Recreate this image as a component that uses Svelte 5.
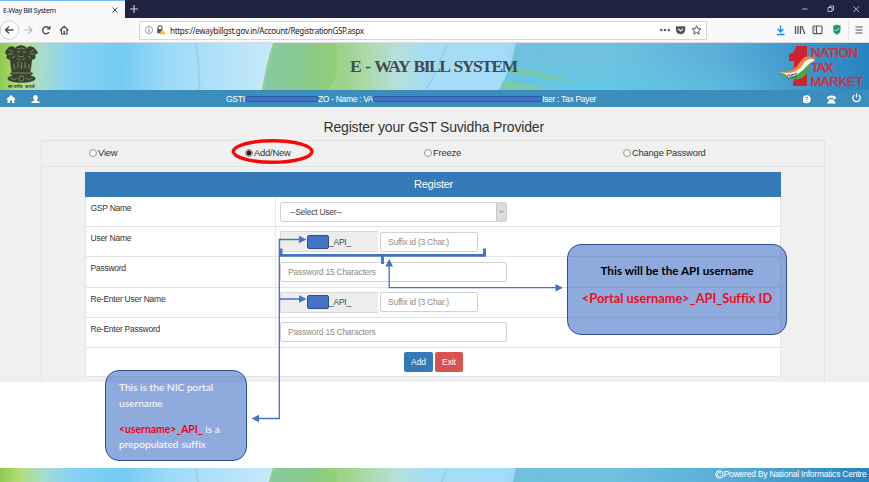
<script>
  const rows = [
    { label: 'GSP Name', kind: 'select' },
    { label: 'User Name', kind: 'user' },
    { label: 'Password', kind: 'password' },
    { label: 'Re-Enter User Name', kind: 'user' },
    { label: 'Re-Enter Password', kind: 'password' }
  ];
  const modes = [
    { label: 'View', cls: 'm-view' },
    { label: 'Add/New', cls: 'm-add', checked: true },
    { label: 'Freeze', cls: 'm-freeze' },
    { label: 'Change Password', cls: 'm-change' }
  ];
</script>

{#snippet scenery(id, h)}
  <svg class="scenery" width="869" height={h} viewBox="0 0 869 {h}" aria-hidden="true">
    <defs>
      <linearGradient id="{id}a" gradientUnits="userSpaceOnUse" x1="0" y1="0" x2="280" y2="12">
        <stop offset="0" stop-color="#8ec850" /><stop offset=".07" stop-color="#b4dc78" />
        <stop offset=".15" stop-color="#a9dccb" /><stop offset=".25" stop-color="#88d2f3" />
        <stop offset=".44" stop-color="#74cbf2" /><stop offset=".6" stop-color="#9cdaf7" />
        <stop offset=".85" stop-color="#b9e4fa" /><stop offset="1" stop-color="#c9eaf9" />
      </linearGradient>
      <linearGradient id="{id}b" gradientUnits="userSpaceOnUse" x1="262" y1="0" x2="530" y2="0">
        <stop offset="0" stop-color="#84c9a4" /><stop offset=".16" stop-color="#88ca8e" />
        <stop offset=".27" stop-color="#95ce78" /><stop offset=".38" stop-color="#aad9a4" />
        <stop offset=".5" stop-color="#b5dfd9" /><stop offset=".62" stop-color="#a6dcf5" />
        <stop offset=".9" stop-color="#a5dcf8" /><stop offset="1" stop-color="#8dcfee" />
      </linearGradient>
      <linearGradient id="{id}c" gradientUnits="userSpaceOnUse" x1="505" y1="30" x2="869" y2="0">
        <stop offset="0" stop-color="#70c1dd" /><stop offset=".3" stop-color="#70c0df" />
        <stop offset=".6" stop-color="#5aaed8" /><stop offset="1" stop-color="#2583c1" />
      </linearGradient>
      <radialGradient id="{id}d" gradientUnits="userSpaceOnUse" cx="0" cy="0" r="1" gradientTransform="translate(590 56) scale(230 46)">
        <stop offset="0" stop-color="#58cbe8" stop-opacity=".85" /><stop offset="1" stop-color="#5bcbe6" stop-opacity="0" />
      </radialGradient>
      <linearGradient id="{id}e" x1="0" y1="0" x2="1" y2="0">
        <stop offset="0" stop-color="#c5ecc8" stop-opacity=".2" /><stop offset="1" stop-color="#a6ddb5" stop-opacity="0" />
      </linearGradient>
    </defs>
    <rect width="285" height="47" fill="url(#{id}a)" />
    <path d="M93 0Q99 18 103 47" fill="none" stroke="#7fd0d5" stroke-width="3" opacity=".3" />
    <path d="M196 0Q200 24 199 47" fill="none" stroke="#8bcfd0" stroke-width="2" opacity=".6" />
    <path d="M273 0H530V47H262Q266 22 273 0Z" fill="url(#{id}b)" />
    <path d="M264 47Q266 24 274 0" fill="none" stroke="#9ad18d" stroke-width="1.5" />
    <path d="M336 0Q343 25 329 47H355Q364 20 350 0Z" fill="url(#{id}e)" />
    <path d="M447 0Q439 24 426 47" fill="none" stroke="#79c1df" stroke-width="1.3" opacity=".5" />
    <path d="M516 0H869V47H499Q512 24 516 0Z" fill="url(#{id}c)" />
    <path d="M516 0H869V47H499Q512 24 516 0Z" fill="url(#{id}d)" />
    {#if h > 20}
      <path d="M509 24Q535 27 580 40Q540 35 508 29Z" fill="#82ca8b" opacity=".7" />
      <path d="M503 38Q525 39 552 47H500Z" fill="#85cb9a" opacity=".7" />
    {/if}
  </svg>
{/snippet}

<div class="page">
  <div class="tabs">
    <div class="tab"><span>E-Way Bill System</span>
      <svg width="6" height="6" viewBox="0 0 6 6"><path d="M.5.5l5 5M5.500.5l-5 5" stroke="#444" stroke-width="1" /></svg>
    </div>
    <svg class="plus" width="8" height="8" viewBox="0 0 8 8"><path d="M4 0v8M0 4h8" stroke="#d5d5dc" stroke-width="1" /></svg>
    <svg class="win" width="60" height="8" viewBox="0 0 60 8" fill="none" stroke="#c4c4cf" stroke-width=".9">
      <path d="M0 4h5.500M26 2.500h4v4h-4zM27.500 2.500v-1.500h4v4H30M51.500 1.500l5.500 5.500M57 1.500l-5.500 5.500" />
    </svg>
  </div>

  <div class="toolbar">
    <svg class="navicons" width="72" height="24" viewBox="0 0 72 24" fill="none" stroke="#4c4c4f" stroke-width="1.4">
      <circle cx="9.500" cy="12" r="9.200" fill="#fdfdfd" stroke="#c6c6c8" stroke-width=".8" />
      <path d="M13.500 12H5.500M9 8.500L5.500 12L9 15.500" />
      <path d="M24 12h8M28.500 8.500L32 12l-3.500 3.500" stroke="#b6b6b8" stroke-width="1.1" />
      <path d="M49 14.200A3.500 3.500 0 1 1 48.500 9.600" /><path d="M50.500 7.500v4h-4z" fill="#4c4c4f" stroke="none" />
      <path d="M60 12.200L64.200 8.300L68.400 12.200M61.500 11.500V16H67v-4.500" stroke-width="1.2" /><path d="M63.500 13h1.500v3h-1.500z" fill="#4c4c4f" stroke="none" />
    </svg>
    <div class="url">
      <svg width="24" height="12" viewBox="0 0 24 12">
        <circle cx="5" cy="6" r="3.600" fill="none" stroke="#777" stroke-width=".7" /><path d="M5 5.300v3M5 3.500v1" stroke="#666" stroke-width=".9" />
        <path d="M14 5V3.700a2 2 0 0 1 4 0V5" fill="none" stroke="#555" stroke-width="1.100" /><rect x="13.200" y="5" width="5.600" height="4.300" fill="#555" />
        <path d="M18.300 4.700L21.500 10.300H15.200z" fill="#fdb916" /><path d="M18.300 6.500v2" stroke="#fff" stroke-width=".6" />
      </svg>
      <span class="address">https://ewaybillgst.gov.in/Account/RegistrationGSP.aspx</span>
      <svg class="urlicons" width="44" height="12" viewBox="0 0 44 12">
        <g fill="#555"><circle cx="2.300" cy="6" r="1.200" /><circle cx="6" cy="6" r="1.200" /><circle cx="9.700" cy="6" r="1.200" />
          <path d="M17.500 2.200h8.200q.6 0 .6.6V5.600a4.700 4.700 0 0 1-9.400 0V2.800q0-.6.6-.6z" /></g>
        <path d="M19.300 4.900l2.300 2.200 2.300-2.200" fill="none" stroke="#fff" stroke-width="1.100" />
        <path d="M37.500 1.700l1.200 2.900 3.200.3-2.400 2.100.7 3.100-2.700-1.600-2.700 1.600.7-3.100-2.400-2.100 3.200-.3z" fill="none" stroke="#555" stroke-width="1" />
      </svg>
    </div>
    <svg class="tools" width="92" height="24" viewBox="0 0 92 24" fill="none" stroke="#555" stroke-width="1.100">
      <path d="M4.500 7.500v6M1.700 11l2.800 3 2.800-3M1 16.500h7.500" stroke="#1886f5" stroke-width="1.300" />
      <path d="M19.500 8v8M22 8v8M24.500 8v8M25.800 8l3 8" stroke-width="1.300" />
      <rect x="37" y="8" width="9" height="7.600" rx="1" /><path d="M40.500 8v7.500M38.300 10h1M38.300 12h1" />
      <path d="M57.300 7.600q2 .1 3.600-1 1.500 1 3.600 1v4q0 3.700-3.600 5.200-3.600-1.500-3.600-5.200z" fill="#179a72" stroke="none" /><path d="M59 11.500l1.500 1.500 2.500-3" stroke="#dff5ec" stroke-width=".9" />
      <path d="M72.500 2v20" stroke="#ddd" stroke-width=".8" /><path d="M79.500 9H86.500M79.500 12H86.500M79.500 15H86.500" />
    </svg>
  </div>

  <header class="banner">
    {@render scenery('top', 47)}
    <svg class="emblem" width="38" height="45" viewBox="0 0 38 45" aria-label="National emblem">
      <g fill="#39422f">
        <path d="M14 3Q19-.5 24 3L26 8 24 13 24 24H14V13L11 9z" />
        <path d="M7 3Q12 1 14 5L16 12 15 20 13 26 9 25 8 16Q3 15 5 11L3 9Q4 5 7 3z" />
        <path d="M31 3Q26 1 24 5L22 12 23 20 25 26 29 25 30 16Q35 15 33 11L36 9Q34 5 31 3z" />
        <path d="M10 24h18l1 3-2 2H11l-2-2z" />
        <ellipse cx="19.500" cy="34.500" rx="14" ry="4.300" /><ellipse cx="19.500" cy="29.500" rx="11.500" ry="2.400" />
      </g>
      <g fill="none" stroke="#a8c388" stroke-width=".7" opacity=".8">
        <path d="M15 5q4-2 8 0M15 8h3M21 8h3M16 12q3 2 6 0M15 14l3 2M23 14l-3 2M7 6l4 2M6 10h5M10 14l3-2M32 6l-4 2M33 10h-5M29 14l-3-2M12 20v5M16 18v6M19.500 18v7M23 18v6M27 20v5M10 29h19" />
        <circle cx="19.500" cy="34.500" r="2.600" /><path d="M8 33l4 3 3-2M31 33l-4 3-3-2" />
      </g>
      <text x="19.500" y="43.800" text-anchor="middle" font-size="4.500" font-weight="700" fill="#39422f" textLength="27">सत्यमेव जयते</text>
    </svg>
    <h1>E - WAY BILL SYSTEM</h1>
    <svg class="logo" width="94" height="46" viewBox="0 0 94 46" aria-label="1 Nation Tax Market">
      <path d="M21 3H32V43H18V38H19V18H14V11Q20 10 21 3z" fill="#cf2130" />
      <path d="M3 29Q19 31 25 19Q31 10 41 16Q35 18 31 25Q21 36 3 29z" fill="#f28b35" />
      <path d="M3 29Q22 33 28 21Q33 14 40 17Q35 20 32 26Q22 37 3 29z" fill="#f5f5f2" />
      <path d="M3 29Q22 36 31 24L36 19Q34 33 25 36Q12 38 3 29z" fill="#52a344" />
      <path d="M10 30.500Q20 31 23 27L25 29Q21 34 13 35.500z" fill="#e9ecee" />
      <text x="12" y="36" font-size="6" font-weight="700" fill="#29446c" textLength="11" transform="rotate(-9 12 36)">GST</text>
      <g fill="#c93442" stroke="#c93442" stroke-width=".6" font-family="Liberation Sans, Arial, sans-serif" font-size="13">
        <text x="36" y="14.300" textLength="47">NATION</text>
        <text x="36" y="28.600" textLength="22.500" font-size="13">TAX</text>
        <text x="35.500" y="42.600" textLength="53">MARKET</text>
      </g>
    </svg>
  </header>

  <nav>
    <svg width="42" height="17" viewBox="0 0 42 17" fill="#fff"><path d="M11 5l4.700 4.300h-1.300V13H12v-2.500h-2V13H7.600V9.300H6.300z" />
      <path d="M35.500 5q2.300 0 2.300 2.500 0 1.500-1 2.500v.8l2.800 1V13h-8.200v-1.200l2.800-1V10q-1-1-1-2.500 0-2.500 2.300-2.500z" /></svg>
    <p><span class="t1">GSTI</span><i class="mask one"></i><span class="t2">ZO - Name : VA'</span><i class="mask two"></i><span class="t3">Iser : Tax Payer</span></p>
    <svg class="navright" width="66" height="17" viewBox="0 0 66 17" fill="#fff"><circle cx="3.600" cy="9.300" r="4" /><path d="M2.400 8.100q.1-1.200 1.300-1.200t1.200 1.100q0 .8-1.100 1.200v.7M3.700 11v.8" fill="none" stroke="#3c8dbc" stroke-width=".9" />
      <path d="M24 8Q24 5.500 28.500 5.500T33 8v1h-2.600V7.800h-3.800V9H24zM26.500 9.200h4l2.300 4.300h-8.600z" /><path d="M51.200 5.100a3.700 3.700 0 1 0 4.600 0M53.500 3.400v4" fill="none" stroke="#fff" stroke-width="1.200" /></svg>
  </nav>

  <main>
    <h2><span>Register your GST Suvidha Provider</span></h2>
    <section>
      <div class="modes">
        {#each modes as m}
          <label class={m.cls}><i class="radio" class:checked={m.checked}></i><span>{m.label}</span></label>
        {/each}
      </div>
      <div class="form">
        <div class="formhead"><span>Register</span></div>
        {#each rows as r}
          <div class="row">
            <div class="name"><span>{r.label}</span></div>
            <div class="field">
              {#if r.kind === 'select'}
                <div class="select"><span>--Select User--</span><b><svg width="5" height="4" viewBox="0 0 5 4"><path d="M.7.700L2.500 2.700 4.300.7" fill="none" stroke="#666" stroke-width=".8" /></svg></b></div>
              {:else if r.kind === 'user'}
                <div class="addon"><i></i><span>_API_</span></div>
                <div class="input suffix"><span>Suffix id (3 Char.)</span></div>
              {:else}
                <div class="input"><span>Password 15 Characters</span></div>
              {/if}
            </div>
          </div>
        {/each}
        <div class="actions"><button class="add">Add</button><button class="exit">Exit</button></div>
      </div>
    </section>
  </main>

  <div class="blank"></div>

  <footer>
    {@render scenery('foot', 14)}
    <p><svg width="9" height="9" viewBox="0 0 9 9" fill="none" stroke="#fff"><circle cx="4.500" cy="4.500" r="3.700" stroke-width="1" /><path d="M6 3.300a2 2 0 1 0 0 2.400" stroke-width=".9" /></svg><span>Powered By National Informatics Centre</span></p>
  </footer>

  <svg class="marks" width="869" height="482" viewBox="0 0 869 482" fill="none" aria-hidden="true">
    <ellipse cx="272.700" cy="151.500" rx="39.300" ry="10.800" stroke="#f60909" stroke-width="3.400" />
    <g stroke="#4472c4" stroke-width="1.300">
      <path d="M300 239.500H279.300V418.500H258M279.300 299H300" />
      <path d="M389.200 266V287.700H557" />
    </g>
    <path d="M281 248.500V255.400H484.500V248.500M382.500 255V264" stroke="#4472c4" stroke-width="2.900" />
    <g fill="#4472c4">
      <path d="M299 235.700l7.500 3.800-7.500 3.800zM299 295.200l7.500 3.800-7.500 3.800zM385.400 266.500l3.800-7.500 3.800 7.500zM555.500 283.900l7.500 3.800-7.500 3.800zM259 414.700l-7.500 3.800 7.500 3.800z" />
    </g>
  </svg>
  <aside class="callout right">
    <p class="black">This will be the API username</p>
    <p class="red">&lt;Portal username&gt;_API_Suffix ID</p>
  </aside>
  <aside class="callout left">
    <p>This is the NIC portal<br />username</p>
    <p><strong>&lt;username&gt;_API_</strong> is a<br />prepopulated suffix</p>
  </aside>
</div>

<style>
  :global(body) { margin: 0; background: #fff; overflow: hidden; }
  * { box-sizing: border-box; }
  svg { display: block; flex: none; }
  .page { position: relative; width: 869px; height: 482px; display: flex; flex-direction: column; overflow: hidden; font-family: "Liberation Sans", Arial, sans-serif; color: #333; white-space: nowrap; }
  .tabs { height: 18px; flex: none; background: #202340; display: flex; align-items: center; }
  .tab { width: 125px; height: 18px; background: #f8f8fa; border-top: 1px solid #7ab8f0; padding: 0 7px 0 3px; display: flex; align-items: center; justify-content: space-between; font: 7.200px "Noto Sans", "Open Sans", sans-serif; letter-spacing: -.36px; color: #222; }
  .plus { margin-left: 5px; }
  .win { margin-left: auto; margin-right: 7px; }
  .toolbar { height: 25px; flex: none; background: #f9f9fa; border-bottom: 1px solid #d8dbe0; display: flex; align-items: center; }
  .url { width: 568px; height: 19px; margin-left: 67px; background: #fff; border: 1px solid #d4d4d6; border-radius: 1px; display: flex; align-items: center; padding: 0 3px 0 4px; }
  .address { margin-left: 2px; font: 8px "Noto Sans", "Open Sans", sans-serif; letter-spacing: -.29px; color: #222; }
  .urlicons { margin-left: auto; }
  .tools { margin-left: auto; margin-right: 1px; }
  .banner { height: 47px; flex: none; position: relative; display: flex; align-items: flex-start; }
  .scenery { position: absolute; inset: 0; }
  .emblem { position: relative; margin: 1px 0 0 2px; }
  h1 { position: relative; margin: 11px 0 0 310px; width: 168px; font: 700 17.500px/24px "Liberation Serif", serif; letter-spacing: -1.430px; word-spacing: 2px; color: #444b50; }
  .logo { position: relative; margin: 0 0 0 auto; }
  nav { height: 18px; flex: none; background: #3c8dbc; border-bottom: 1px solid #e8f2f8; color: #fff; display: flex; }
  nav p { margin: 0 0 0 184px; display: flex; align-items: center; font-size: 8.500px; letter-spacing: -.25px; line-height: 16px; height: 17px; }
  .mask { display: block; height: 6px; background: #4472c4; border: 1px solid #2e57a4; border-radius: 1px; }
  .mask.one { width: 72px; }
  .mask.two { width: 169px; }
  .t1 { width: 20px; } .t2 { width: 55px; letter-spacing: -.33px; } .t3 { letter-spacing: -.3px; }
  .navright { margin-left: auto; }
  main { height: 274px; flex: none; background: #f0f0f0; padding: 8px 44px 0 41px; display: flex; flex-direction: column; }
  h2 { margin: 0; height: 24px; font-size: 14px; font-weight: 400; line-height: 22px; padding-left: 282.500px; letter-spacing: -.17px; color: #333; }
  section { flex: 1; border: 1px solid #e4e4e4; border-bottom: 0; }
  .modes { height: 26px; border-bottom: 1px solid #e2e2e2; display: flex; align-items: center; font-size: 9.400px; letter-spacing: -.2px; }
  .modes label { display: flex; align-items: center; gap: 1px; padding-bottom: 2px; }
  .m-view { margin-left: 47px; width: 156px; }
  .m-add { width: 179px; }
  .m-freeze { width: 199px; }
  .radio { width: 8px; height: 8px; border: 1px solid #999; border-radius: 50%; background: #f8f8f8; }
  .radio.checked { background: radial-gradient(circle, #222 0 2.300px, #eee 2.800px); border-color: #888; }
  .form { margin: 5px 0 0 43px; width: 696px; background: #fff; border: 1px solid #e4e4e4; border-top: 0; height: 205px; }
  .formhead { margin: 0 -1px; height: 25px; background: #337ab7; color: #fff; text-align: center; font-size: 11px; letter-spacing: -.25px; line-height: 24px; padding-left: 1px; }
  .row { height: 30.200px; border-bottom: 1px solid #e4e4e4; display: flex; font-size: 8.500px; letter-spacing: -.25px; }
  .name { width: 190px; border-right: 1px solid #e8e8e8; padding: 5px 0 0 4.500px; line-height: 12px; }
  .field { display: flex; align-items: center; padding-left: 4px; }
  .select, .input { width: 227px; height: 20px; border: 1px solid #d2d2d2; border-radius: 2px; background: #fff; display: flex; align-items: center; padding-left: 7px; color: #8d8d8d; }
  .select { color: #444; padding-left: 9px; justify-content: space-between; }
  .select b { width: 10px; height: 18px; background: #dcdcdc; border-left: 1px solid #c8c8c8; display: grid; place-items: center; }
  .addon { width: 98px; height: 21px; background: #ededed; border: 1px solid #d8d8d8; border-right: 0; border-radius: 2px 0 0 2px; display: flex; align-items: center; color: #444; }
  .addon i { width: 22px; height: 14px; margin-left: 26px; background: #4472c4; border: 1px solid #2f528f; border-radius: 2px; }
  .suffix { width: 98px; margin-left: 2px; }
  .actions { height: 29px; display: flex; justify-content: center; align-items: center; gap: 2px; padding-left: 1px; }
  button { border: 0; height: 20px; padding: 0; border-radius: 2px; color: #fff; font: 8.500px "Liberation Sans", Arial, sans-serif; letter-spacing: -.1px; }
  .add { width: 29px; background: #337ab7; }
  .exit { width: 28px; background: #d9534f; }
  .blank { flex: 1; }
  footer { position: relative; height: 14px; flex: none; display: flex; justify-content: flex-end; color: #fff; }
  footer p { position: relative; margin: 0; height: 12px; display: flex; align-items: center; padding-right: 2.500px; font-size: 8.500px; letter-spacing: -.22px; }
  .marks { position: absolute; left: 0; top: 0; }
  .callout { position: absolute; background: rgba(68, 114, 196, .6); border: 1px solid #2f528f; border-radius: 14px; font-family: Lato, sans-serif; font-variant-ligatures: none; color: #fff; }
  .callout p { margin: 0; }
  .right { left: 567px; top: 244px; width: 220px; height: 91px; text-align: center; font-weight: 700; padding-top: 17px; }
  .right .black { font-size: 11.700px; line-height: 16px; color: #000; }
  .right .red { font-size: 12.800px; line-height: 18px; margin-top: 11px; color: #f00c1c; }
  .left { left: 105px; top: 370px; width: 142px; height: 91px; font-size: 10.200px; line-height: 15.500px; padding: 9px 0 0 13px; }
  .left p + p { margin-top: 10.500px; }
  .left strong { font-size: 10.400px; color: #f0000e; }
</style>
